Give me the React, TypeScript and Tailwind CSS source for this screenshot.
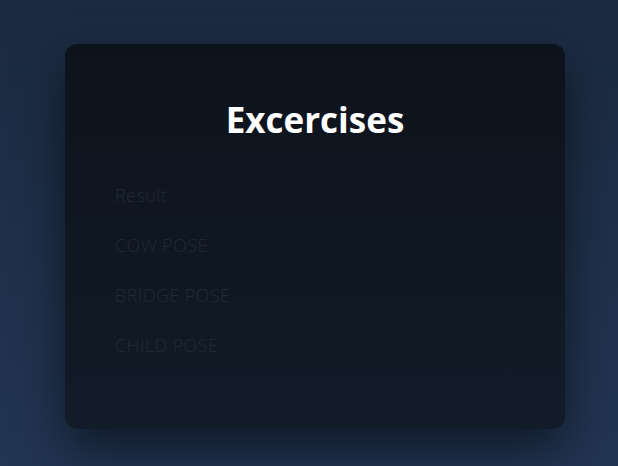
const items = ["Result", "COW POSE", "BRIDGE POSE", "CHILD POSE"];

const App = () => {
  return (
    <main className="w-full h-[466px] bg-gradient-to-b from-[#1b2a40] to-[#223553] pt-[44px] font-['Open_Sans',sans-serif]">
      {/* Card */}
      <section className="ml-[65px] w-[500px] h-[385px] rounded-xl bg-gradient-to-b from-[#0d131c] to-[#121b28] shadow-[0_22px_50px_rgba(0,0,0,0.5)] pt-[56px] px-[50px]">
        <h1 className="text-center text-white text-[35px] leading-[40px] font-bold">Excercises</h1>
        <ul className="mt-[42px] flex flex-col gap-[23px]">
          {items.map((item) => (
            <li key={item} className="text-[18px] leading-[27px] font-light tracking-[0.4px] text-[#222a37]">
              {item}
            </li>
          ))}
        </ul>
      </section>
    </main>
  );
};

export default App;
